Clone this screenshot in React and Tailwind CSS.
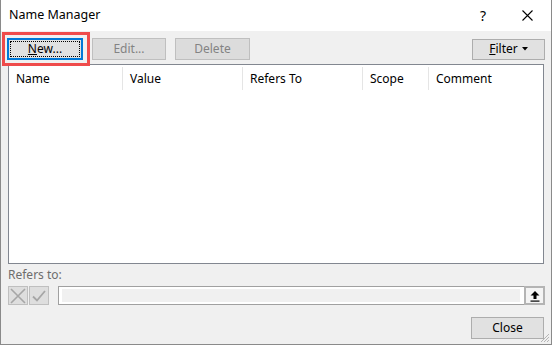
import React from "react";

const font = { fontFamily: '"Noto Sans", "Open Sans", sans-serif' };

const columns = [
  { label: "Name", w: "w-[114px]" },
  { label: "Value", w: "w-[120px]" },
  { label: "Refers To", w: "w-[120px]" },
  { label: "Scope", w: "w-[66px]" },
  { label: "Comment", w: "flex-1" },
];

const App = () => {
  return (
    <div
      className="relative w-[552px] h-[345px] bg-[#f0f0f0] border-x border-b border-[#8a8a8a] flex flex-col text-[12px] text-black overflow-hidden"
      style={font}
    >
      {/* title bar */}
      <div className="h-[31px] bg-white flex items-center pl-[8px] shrink-0">
        <span className="leading-none text-[12.5px]">Name Manager</span>
        <span className="ml-auto mr-[36px] text-[14px] leading-none">?</span>
        <svg width="11" height="11" viewBox="0 0 11 11" className="mr-[18px]">
          <path d="M0.5 0.5 L10.5 10.5 M10.5 0.5 L0.5 10.5" stroke="#000" strokeWidth="1.1" fill="none" />
        </svg>
      </div>

      {/* toolbar */}
      <div className="flex items-center h-[22px] mt-[7px] pl-[6px] pr-[6px] shrink-0">
        <button className="w-[76px] h-[22px] border-2 border-[#0078d7] bg-[#e1e1e1] p-[1px]">
          <div className="h-full border border-dotted border-black flex items-center justify-center leading-none">
            <span><span className="underline">N</span>ew...</span>
          </div>
        </button>
        <button className="ml-[9px] w-[74px] h-[22px] border border-[#bfbfbf] bg-[#dcdcdc] text-[#838383] leading-none">
          Edit...
        </button>
        <button className="ml-[9px] w-[75px] h-[22px] border border-[#bfbfbf] bg-[#dcdcdc] text-[#838383] leading-none">
          Delete
        </button>
        <button className="ml-auto w-[73px] h-[21px] border border-[#adadad] bg-[#e1e1e1] flex items-center justify-center gap-[4px] leading-none">
          <span><span className="underline">F</span>ilter</span>
          <svg width="6" height="4" viewBox="0 0 6 4">
            <path d="M0 0 H6 L3 3.5 Z" fill="#000" />
          </svg>
        </button>
      </div>

      {/* list */}
      <div className="mt-[4px] mx-[7px] h-[200px] bg-white border border-[#828790] shrink-0">
        <div className="flex h-[25px]">
          {columns.map((c, i) => (
            <div
              key={c.label}
              className={`${c.w} flex items-center pl-[7px] mt-[2px] ${
                i < columns.length - 1 ? "border-r border-[#e5e5e5]" : ""
              }`}
            >
              {c.label}
            </div>
          ))}
        </div>
      </div>

      {/* refers to */}
      <div className="mt-[3px] pl-[7px] h-[16px] leading-[16px] text-[#6d6d6d] shrink-0">Refers to:</div>
      <div className="mt-[3px] flex items-stretch h-[19px] pl-[7px] pr-[6px] shrink-0">
        <div className="w-[20px] border border-[#bfbfbf] bg-[#dedede] flex items-center justify-center">
          <svg width="16" height="16" viewBox="0 0 16 16">
            <path d="M1 1 L15 15 M15 1 L1 15" stroke="#a6a6a6" strokeWidth="1.6" fill="none" />
          </svg>
        </div>
        <div className="ml-[1px] w-[20px] border border-[#bfbfbf] bg-[#dedede] flex items-center justify-center">
          <svg width="16" height="14" viewBox="0 0 16 14">
            <path d="M2 7.5 L6 11.5 L14 2" stroke="#a6a6a6" strokeWidth="1.8" fill="none" />
          </svg>
        </div>
        <div className="ml-[9px] flex-1 flex border border-[#a0a0a0] bg-white">
          <div className="flex-1 my-[2px] ml-[3px] mr-[4px] bg-[#f0f0f0]" />
          <div className="w-[21px] -my-[1px] -mr-[1px] border-2 border-[#b4b4b4] bg-[#f4f4f4] flex items-center justify-center">
            <svg width="10" height="12" viewBox="0 0 10 12">
              <path d="M5 1 L9.5 5.5 H6.5 V9 H3.5 V5.5 H0.5 Z" fill="#000" />
              <rect x="0.5" y="10.5" width="9" height="1.2" fill="#000" />
            </svg>
          </div>
        </div>
      </div>

      {/* footer */}
      <div className="mt-[12px] flex justify-end pr-[7px] shrink-0">
        <button className="w-[73px] h-[22px] border border-[#adadad] bg-[#e1e1e1] leading-none">Close</button>
      </div>

      {/* size grip */}
      <svg width="10" height="10" viewBox="0 0 10 10" className="absolute right-[1px] bottom-[1px]">
        <path d="M9 1 L1 9 M9 4 L4 9 M9 7 L7 9" stroke="#b5b5b5" strokeWidth="1" fill="none" />
      </svg>

      {/* highlight around New */}
      <div className="absolute left-[1px] top-[32px] w-[88px] h-[34px] border-[3px] border-[#ef4b4b] pointer-events-none" />
    </div>
  );
};

export default App;
